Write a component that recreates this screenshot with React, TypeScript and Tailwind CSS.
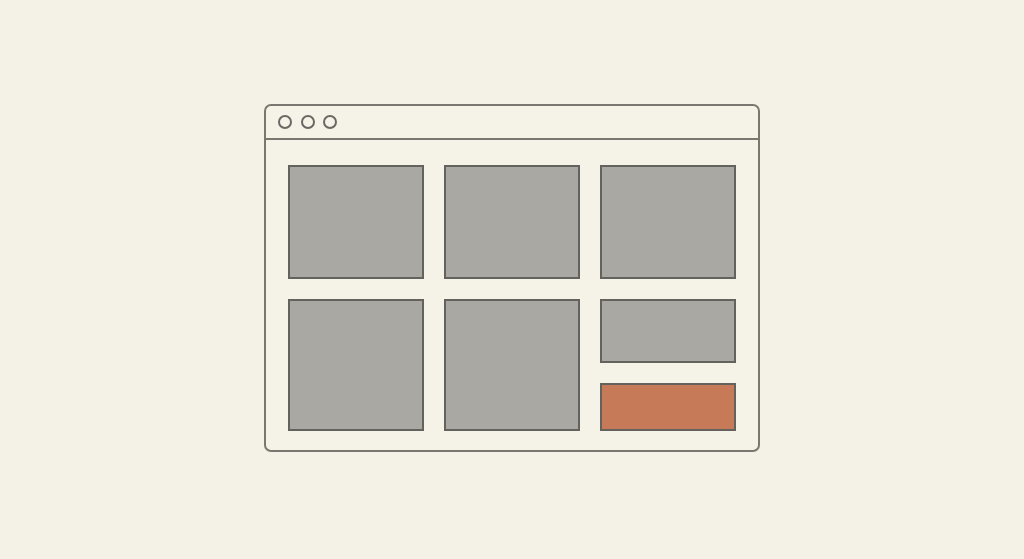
export default function App() {
  return (
    <div className="w-[1024px] h-[559px] bg-[#f4f1e6] flex items-start justify-start">
      <div className="ml-[264px] mt-[104px] w-[496px] h-[348px] rounded-[7px] border-2 border-[#7a7770] bg-[#f5f2e8] flex flex-col">
        <div className="h-[34px] border-b-2 border-[#7a7770] flex items-center pl-[12px] gap-[8.5px]">
          <div className="w-[14px] h-[14px] rounded-full border-2 border-[#6a6862]" />
          <div className="w-[14px] h-[14px] rounded-full border-2 border-[#6a6862]" />
          <div className="w-[14px] h-[14px] rounded-full border-2 border-[#6a6862]" />
        </div>
        <div className="pl-[22px] pt-[25px] grid grid-cols-[136px_136px_136px] grid-rows-[114px_132px] gap-[20px]">
          <div className="bg-[#a9a8a3] border-2 border-[#64625c]" />
          <div className="bg-[#a9a8a3] border-2 border-[#64625c]" />
          <div className="bg-[#a9a8a3] border-2 border-[#64625c]" />
          <div className="bg-[#a9a8a3] border-2 border-[#64625c]" />
          <div className="bg-[#a9a8a3] border-2 border-[#64625c]" />
          <div className="flex flex-col gap-[20px]">
            <div className="h-[64px] bg-[#a9a8a3] border-2 border-[#64625c]" />
            <div className="flex-1 bg-[#c67a58] border-2 border-[#64625c]" />
          </div>
        </div>
      </div>
    </div>
  );
}
